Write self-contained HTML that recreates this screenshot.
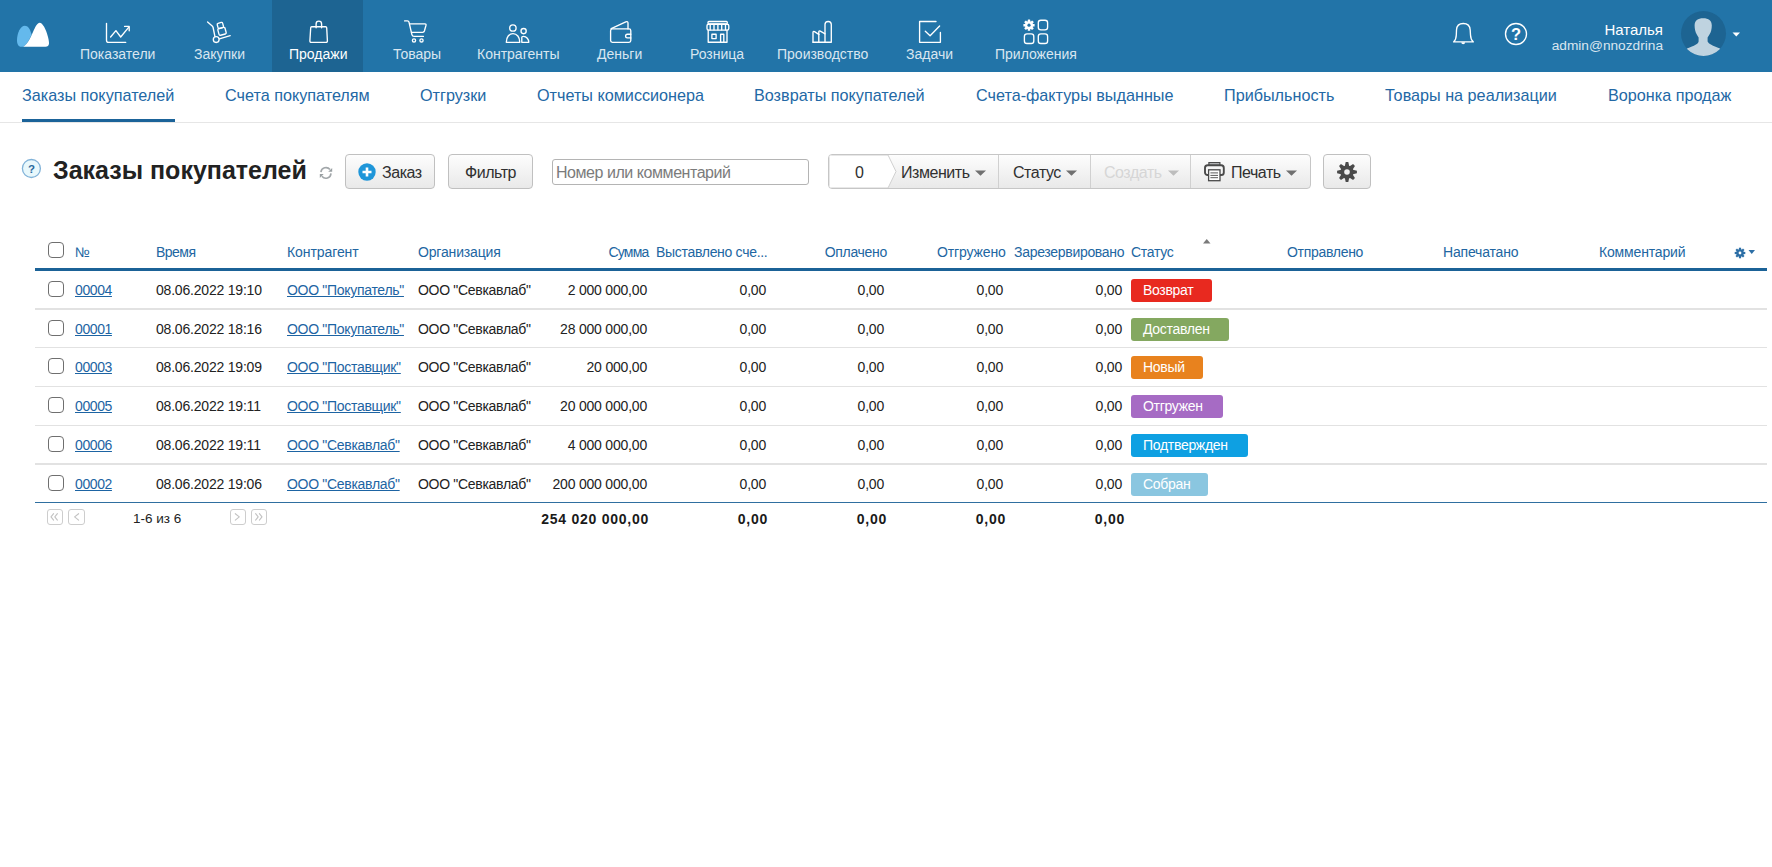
<!DOCTYPE html>
<html><head><meta charset="utf-8">
<style>
*{box-sizing:border-box;margin:0;padding:0}
html,body{width:1772px;height:867px;overflow:hidden;background:#fff;font-family:"Liberation Sans",sans-serif;color:#222}
.a{position:absolute;white-space:nowrap}
#hdr{position:absolute;left:0;top:0;width:1772px;height:72px;background:#2274a8}
#act{position:absolute;left:272px;top:0;width:91px;height:72px;background:#1d6492}
.nl{position:absolute;top:46px;font-size:14px;line-height:16px;color:#d9e6f0}
.ic{position:absolute;overflow:visible}
.sn{position:absolute;top:85px;font-size:16.2px;line-height:20px;color:#2368a5}
#subline{position:absolute;left:0;top:122px;width:1772px;height:1px;background:#e6e6e6}
.btn{position:absolute;top:154px;height:35px;border:1px solid #c0c0c0;border-radius:4px;background:linear-gradient(#fdfdfd,#e9e9e9);font-size:16px;letter-spacing:-0.45px;line-height:33px;color:#303030}
.th{position:absolute;top:244px;font-size:14px;letter-spacing:-0.3px;line-height:17px;color:#2166a2}
.td{position:absolute;font-size:14px;letter-spacing:-0.3px;line-height:17px;color:#222}
.n{letter-spacing:-0.2px}
.lnk.n{letter-spacing:-0.4px}
.lnk{color:#1d64a3;text-decoration:underline}
.r{text-align:right}
.badge{position:absolute;left:1131px;height:23px;border-radius:3px;color:#fff;font-size:14px;letter-spacing:-0.3px;line-height:23px;padding-left:12px}
.cb{position:absolute;left:48px;width:16px;height:16px;border:1.6px solid #6f6f6f;border-radius:4px;background:#fff}
.sep{position:absolute;left:35px;width:1732px;background:#e2e2e2}
.pg{position:absolute;top:509px;width:16px;height:16px;border:1px solid #cdcdcd;border-radius:3px;background:#fff}
.tot{position:absolute;top:511px;font-size:14px;font-weight:bold;line-height:17px;color:#1a1a1a;text-align:right;letter-spacing:0.75px}
</style></head><body>
<div id="hdr"></div>
<div id="act"></div>
<svg class="ic" style="left:0;top:0" width="1772" height="72" viewBox="0 0 1772 72">
 <!-- logo -->
 <path d="M17 40.5 C17 33 20.5 25.8 24.8 25.8 C28 25.8 30 29 31.6 34.5 C29 40.5 26.5 44.5 23.5 46.8 L21 46.8 C18.5 46.8 17 44 17 40.5 Z" fill="#64b9ec"/>
 <path d="M23.3 46.8 C27 44.5 30 39 33 32 C35.5 26.5 37.5 22.8 39.6 22.8 C42.5 22.8 46 29 48 37 C49 41 49 42.5 49 43.5 C49 45.5 47.5 46.8 45.5 46.8 Z" fill="#fff"/>
 <g fill="none" stroke="#fff" stroke-width="1.35" stroke-linecap="round" stroke-linejoin="round">
  <!-- chart -->
  <path d="M106.5 23.3 V40.2 Q106.5 42.4 108.7 42.4 H125.7"/>
  <path d="M110.6 37 L115.9 30.6 L120.7 37 L128.6 27.4"/>
  <path d="M124.6 26.4 H129.2 V30.8"/>
  <!-- hand truck -->
  <path d="M207.6 22 L212.2 26 Q213 26.8 213.2 28 L214.9 36.3"/>
  <circle cx="216.2" cy="39.6" r="2.9"/>
  <path d="M219.4 38.8 L230.2 35.7"/>
  <g transform="rotate(-15 223 34.6)">
   <rect x="220" y="22.4" width="5.6" height="5.4" rx="1.2"/>
   <rect x="219.2" y="27.8" width="7.4" height="6.8" rx="1.2"/>
  </g>
  <!-- bag -->
  <path d="M311.7 26.7 H325.6 Q326.6 26.7 326.7 27.7 L327.4 40.8 Q327.5 42.3 326 42.3 H311.3 Q309.8 42.3 309.9 40.8 L310.7 27.7 Q310.8 26.7 311.7 26.7 Z"/>
  <path d="M316.1 27.8 V23.9 A2.75 2.75 0 0 1 321.6 23.9 V27.8"/>
  <!-- cart -->
  <path d="M404.6 20.9 H407.4 Q408.7 20.9 409 22.2 L411.9 34.6 Q412.3 36.4 414.1 36.4 H423.4"/>
  <path d="M409.7 23.9 H425 Q426.3 23.9 426 25.2 L424.4 31 Q424 32.3 422.7 32.3 H411.5"/>
  <circle cx="414" cy="40.4" r="1.6"/>
  <circle cx="421.5" cy="40.4" r="1.6"/>
  <!-- people -->
  <circle cx="512.9" cy="28" r="3.2"/>
  <path d="M506.3 42.3 C506.3 37.2 509.2 33.6 513 33.6 C516.9 33.6 519.8 37.2 519.8 42.3 Z"/>
  <circle cx="523.6" cy="31.1" r="2.6"/>
  <path d="M521.8 42.3 V37.3 Q521.8 36.4 523.4 36.4 C526.6 36.4 528.8 39.2 528.8 42.3 Z"/>
  <!-- wallet -->
  <path d="M612.4 28.9 H629 Q630.8 28.9 630.8 30.7 V40.5 Q630.8 42.3 629 42.3 H612.4 Q610.6 42.3 610.6 40.5 V30.7 Q610.6 28.9 612.4 28.9 Z"/>
  <path d="M611.2 28.7 L625.8 21.9 Q628 21 628 23.2 V28.9"/>
  <path d="M630.8 34.2 H627.4 Q625.6 34.2 625.6 36.05 Q625.6 37.9 627.4 37.9 H630.8"/>
  <!-- store -->
  <rect x="708" y="21.5" width="19.3" height="2.3" rx="0.9"/>
  <rect x="707" y="24.2" width="21.8" height="5.9" rx="1.6"/>
  <path d="M710.2 24.6 V29.7 M714 24.6 V29.7 M717.9 24.6 V29.7 M721.7 24.6 V29.7 M725.5 24.6 V29.7"/>
  <path d="M708.2 30.2 V42.2 H727 V30.2"/>
  <rect x="711.9" y="34.2" width="4.2" height="4.4"/>
  <path d="M720.6 42.2 V34.2 H723.8 V42.2"/>
  <!-- factory -->
  <path d="M813 42.2 V32.6 Q813 30.9 814.5 31.7 L818.8 34.3 V32.1 Q818.8 30.4 820.3 31.2 L825.1 33.8"/>
  <path d="M818.8 34.3 V42.2"/>
  <path d="M813 42.2 H831.3 V24.6 A3.15 3.15 0 0 0 825 24.6 V42.2"/>
  <!-- tasks -->
  <path d="M936 21.5 H919.6 V42.3 H940.4 V32.4"/>
  <path d="M925.3 31.2 L930.1 35.7 L939.6 26"/>
  <!-- apps -->
  <rect x="1038.3" y="20.2" width="9.3" height="9.6" rx="2.6"/>
  <rect x="1024.4" y="33.9" width="9.4" height="9.6" rx="2.6"/>
  <rect x="1038.3" y="33.9" width="9.3" height="9.6" rx="2.6"/>
  <!-- bell -->
  <path d="M1453.6 41.9 Q1456.2 39.5 1456.3 35 L1456.5 30 Q1456.8 23.5 1463.3 23.5 Q1469.8 23.5 1470.2 30 L1470.5 35 Q1470.6 39.5 1473.4 41.9 Z"/>
  <!-- help -->
  <circle cx="1516" cy="34" r="10.5"/>
 </g>
 <path d="M1461.3 42.3 A1.9 1.9 0 0 0 1465.1 42.3 Z" fill="#fff"/>
 <!-- apps gear -->
 <g transform="translate(1029 25.2)" fill="#fff">
  <circle r="4"/>
  <rect x="-1.25" y="-5.6" width="2.5" height="11.2" rx="0.5"/>
  <rect x="-1.25" y="-5.6" width="2.5" height="11.2" rx="0.5" transform="rotate(45)"/>
  <rect x="-1.25" y="-5.6" width="2.5" height="11.2" rx="0.5" transform="rotate(90)"/>
  <rect x="-1.25" y="-5.6" width="2.5" height="11.2" rx="0.5" transform="rotate(135)"/>
  <circle r="1.6" fill="#2274a8"/>
 </g>
 <text x="1516" y="40.2" text-anchor="middle" font-family="Liberation Sans" font-weight="bold" font-size="16.5" fill="#fff">?</text>
 <!-- avatar -->
 <circle cx="1703.5" cy="33.5" r="22.5" fill="#1d6492"/>
 <clipPath id="av"><circle cx="1703.5" cy="33.5" r="22.5"/></clipPath>
 <g clip-path="url(#av)" fill="#bfd3e0">
  <path d="M1703.2 18.3 C1708.6 18.3 1711.8 20.6 1711.8 25.6 C1711.8 27.2 1711.6 29 1711.2 30.6 C1710.6 33.4 1708.8 35.8 1707.6 37.4 L1707.6 41.4 C1708.6 43.6 1712.5 45.6 1720 48.4 L1732 60 L1676 60 L1687 48.4 C1694.5 45.6 1698.4 43.6 1698.6 41.4 L1698.6 37.4 C1697.5 35.8 1695.7 33.4 1695.2 30.6 C1694.8 29 1694.6 27.2 1694.6 25.6 C1694.6 20.6 1697.8 18.3 1703.2 18.3 Z"/>
 </g>
 <path d="M1732.5 32.5 H1740 L1736.25 36.5 Z" fill="#fff"/>
</svg>
<div class="nl" style="left:80px">Показатели</div>
<div class="nl" style="left:194px">Закупки</div>
<div class="nl" style="left:289px;color:#fff">Продажи</div>
<div class="nl" style="left:393px">Товары</div>
<div class="nl" style="left:477px">Контрагенты</div>
<div class="nl" style="left:597px">Деньги</div>
<div class="nl" style="left:690px">Розница</div>
<div class="nl" style="left:777px">Производство</div>
<div class="nl" style="left:906px">Задачи</div>
<div class="nl" style="left:995px">Приложения</div>
<div class="a" style="right:109px;top:21px;font-size:15px;line-height:17px;color:#fff">Наталья</div>
<div class="a" style="right:109px;top:37.5px;font-size:13.7px;line-height:16px;color:#d9e6f0">admin@nnozdrina</div>

<!-- sub nav -->
<div class="sn" style="left:22px">Заказы покупателей</div>
<div class="sn" style="left:225px">Счета покупателям</div>
<div class="sn" style="left:420px">Отгрузки</div>
<div class="sn" style="left:537px">Отчеты комиссионера</div>
<div class="sn" style="left:754px">Возвраты покупателей</div>
<div class="sn" style="left:976px">Счета-фактуры выданные</div>
<div class="sn" style="left:1224px">Прибыльность</div>
<div class="sn" style="left:1385px">Товары на реализации</div>
<div class="sn" style="left:1608px">Воронка продаж</div>
<div id="subline"></div>
<div class="a" style="left:22px;top:119px;width:153px;height:3px;background:#1b6399"></div>

<!-- title row -->
<svg class="ic" style="left:0;top:140px" width="1400" height="60" viewBox="0 140 1400 60">
 <circle cx="31.4" cy="168.5" r="9" fill="#e8f8fc" stroke="#80b2d8" stroke-width="1.3"/>
 <text x="31.5" y="172.9" text-anchor="middle" font-family="Liberation Sans" font-weight="bold" font-size="11.5" fill="#2a6a9e">?</text>
 <!-- refresh -->
 <g fill="none" stroke="#a2a7aa" stroke-width="1.6">
  <path d="M320.9 172.2 A5.1 5.1 0 0 1 330 169.6"/>
  <path d="M331 173.4 A5.1 5.1 0 0 1 321.9 176.3"/>
 </g>
 <path d="M332.2 167.9 V171.8 H328.2 Z" fill="#9aa0a3"/>
 <path d="M319.8 174.1 H323.7 L319.8 178 Z" fill="#9aa0a3"/>
</svg>
<div class="a" style="left:53px;top:156px;font-size:25px;line-height:29px;font-weight:bold;color:#222">Заказы покупателей</div>

<div class="btn" style="left:345px;width:90px">
 <svg class="ic" style="left:12px;top:8px" width="18" height="18" viewBox="0 0 18 18"><circle cx="9" cy="9" r="8.7" fill="#1f96d9"/><path d="M9 4.5V13.5M4.5 9H13.5" stroke="#fff" stroke-width="2.6"/></svg>
 <span class="a" style="left:36px;top:1px">Заказ</span>
</div>
<div class="btn" style="left:448px;width:85px;text-align:center;padding-top:1px">Фильтр</div>
<div class="a" style="left:552px;top:159px;width:257px;height:26px;border:1px solid #b4b4b4;border-radius:3px;background:#fff"></div>
<div class="a" style="left:556px;top:164px;font-size:16px;letter-spacing:-0.45px;line-height:18px;color:#7b7b7b">Номер или комментарий</div>

<!-- action group -->
<div class="a" style="left:828px;top:154px;width:483px;height:35px;border:1px solid #c6c6c6;border-radius:4px;background:linear-gradient(#fdfdfd,#e9e9e9);overflow:hidden">
 <svg class="ic" style="left:0;top:0" width="70" height="33" viewBox="0 0 70 33"><path d="M0 0 H59 L67 16.5 L59 33 H0 Z" fill="#fff" stroke="#d0d0d0" stroke-width="1"/></svg>
 <span class="a" style="left:26px;top:1px;font-size:16px;line-height:33px;color:#303030">0</span>
 <span class="a" style="left:72px;top:1px;font-size:16px;letter-spacing:-0.45px;line-height:33px;color:#303030">Изменить</span>
 <svg class="ic" style="left:146px;top:15px" width="12" height="7"><path d="M0 0.6H11L5.5 5.8Z" fill="#707070"/></svg>
 <div class="a" style="left:169px;top:0;width:1px;height:33px;background:#d0d0d0"></div>
 <span class="a" style="left:184px;top:1px;font-size:16px;letter-spacing:-0.45px;line-height:33px;color:#303030">Статус</span>
 <svg class="ic" style="left:237px;top:15px" width="12" height="7"><path d="M0 0.6H11L5.5 5.8Z" fill="#707070"/></svg>
 <div class="a" style="left:261px;top:0;width:1px;height:33px;background:#d0d0d0"></div>
 <span class="a" style="left:275px;top:1px;font-size:16px;letter-spacing:-0.45px;line-height:33px;color:#d6d6d6">Создать</span>
 <svg class="ic" style="left:339px;top:15px" width="12" height="7"><path d="M0 0.6H11L5.5 5.8Z" fill="#bdbdbd"/></svg>
 <div class="a" style="left:361px;top:0;width:1px;height:33px;background:#d0d0d0"></div>
 <svg class="ic" style="left:375px;top:7px" width="21" height="20" viewBox="0 0 21 20">
  <rect x="4.9" y="0.6" width="11" height="2.9" fill="#c8cacc" stroke="#4a4a4a" stroke-width="1.2"/>
  <rect x="1" y="3.3" width="18.8" height="9.7" rx="2.6" fill="#f6f6f6" stroke="#4a4a4a" stroke-width="1.9"/>
  <rect x="4.6" y="7.8" width="11.4" height="10.9" fill="#fff" stroke="#4a4a4a" stroke-width="1.3"/>
  <path d="M6.4 10.9H14M6.4 13.4H14M6.4 15.7H14" stroke="#5a5a5a" stroke-width="1"/>
 </svg>
 <span class="a" style="left:402px;top:1px;font-size:16px;letter-spacing:-0.45px;line-height:33px;color:#303030">Печать</span>
 <svg class="ic" style="left:457px;top:15px" width="12" height="7"><path d="M0 0.6H11L5.5 5.8Z" fill="#707070"/></svg>
</div>
<div class="btn" style="left:1323px;width:48px">
 <svg class="ic" style="left:13px;top:7px" width="20" height="20" viewBox="-10 -10 20 20" fill="#4a4a4a">
  <circle r="6.6"/><path d="M-2.4 -5 L2.4 -5 L1.3 -9.9 L-1.3 -9.9 Z" transform="rotate(0)"/><path d="M-2.4 -5 L2.4 -5 L1.3 -9.9 L-1.3 -9.9 Z" transform="rotate(45)"/><path d="M-2.4 -5 L2.4 -5 L1.3 -9.9 L-1.3 -9.9 Z" transform="rotate(90)"/><path d="M-2.4 -5 L2.4 -5 L1.3 -9.9 L-1.3 -9.9 Z" transform="rotate(135)"/><path d="M-2.4 -5 L2.4 -5 L1.3 -9.9 L-1.3 -9.9 Z" transform="rotate(180)"/><path d="M-2.4 -5 L2.4 -5 L1.3 -9.9 L-1.3 -9.9 Z" transform="rotate(225)"/><path d="M-2.4 -5 L2.4 -5 L1.3 -9.9 L-1.3 -9.9 Z" transform="rotate(270)"/><path d="M-2.4 -5 L2.4 -5 L1.3 -9.9 L-1.3 -9.9 Z" transform="rotate(315)"/>
  <circle r="2.8" fill="#f1f1f1"/>
 </svg>
</div>
<!-- table header -->
<div class="cb" style="top:242px"></div>
<div class="th" style="left:75px">№</div>
<div class="th" style="left:156px;letter-spacing:-0.54px">Время</div>
<div class="th" style="left:287px;letter-spacing:-0.08px">Контрагент</div>
<div class="th" style="left:418px;letter-spacing:-0.16px">Организация</div>
<div class="th" style="right:1123.5px;letter-spacing:-0.8px">Сумма</div>
<div class="th" style="left:656px">Выставлено сче...</div>
<div class="th" style="right:885px">Оплачено</div>
<div class="th" style="right:766.3px;letter-spacing:-0.12px">Отгружено</div>
<div class="th" style="left:1014px">Зарезервировано</div>
<div class="th" style="left:1131px">Статус</div>
<div class="th" style="left:1287px">Отправлено</div>
<div class="th" style="left:1443px;letter-spacing:-0.18px">Напечатано</div>
<div class="th" style="left:1599px;letter-spacing:-0.17px">Комментарий</div>
<div class="a" style="left:35px;top:268px;width:1732px;height:3px;background:#1b6297"></div>
<div class="sep" style="top:308px;height:2px"></div>
<div class="sep" style="top:347px;height:1px"></div>
<div class="sep" style="top:386px;height:1px"></div>
<div class="sep" style="top:425px;height:1px"></div>
<div class="sep" style="top:463px;height:2px"></div>
<div class="a" style="left:35px;top:502px;width:1732px;height:1px;background:#2f6fa0"></div>
<div class="cb" style="top:281px"></div>
<div class="td lnk n" style="left:75px;top:282px">00004</div>
<div class="td n" style="left:156px;top:282px">08.06.2022 19:10</div>
<div class="td lnk" style="left:287px;top:282px">ООО "Покупатель"</div>
<div class="td" style="left:418px;top:282px">ООО "Севкавлаб"</div>
<div class="td n" style="right:1125px;top:282px">2 000 000,00</div>
<div class="td n" style="right:1006px;top:282px">0,00</div>
<div class="td n" style="right:888px;top:282px">0,00</div>
<div class="td n" style="right:769px;top:282px">0,00</div>
<div class="td n" style="right:650px;top:282px">0,00</div>
<div class="badge" style="top:279px;width:81px;background:#e8291f">Возврат</div>
<div class="cb" style="top:320px"></div>
<div class="td lnk n" style="left:75px;top:321px">00001</div>
<div class="td n" style="left:156px;top:321px">08.06.2022 18:16</div>
<div class="td lnk" style="left:287px;top:321px">ООО "Покупатель"</div>
<div class="td" style="left:418px;top:321px">ООО "Севкавлаб"</div>
<div class="td n" style="right:1125px;top:321px">28 000 000,00</div>
<div class="td n" style="right:1006px;top:321px">0,00</div>
<div class="td n" style="right:888px;top:321px">0,00</div>
<div class="td n" style="right:769px;top:321px">0,00</div>
<div class="td n" style="right:650px;top:321px">0,00</div>
<div class="badge" style="top:318px;width:98px;background:#84a860">Доставлен</div>
<div class="cb" style="top:358px"></div>
<div class="td lnk n" style="left:75px;top:359px">00003</div>
<div class="td n" style="left:156px;top:359px">08.06.2022 19:09</div>
<div class="td lnk" style="left:287px;top:359px">ООО "Поставщик"</div>
<div class="td" style="left:418px;top:359px">ООО "Севкавлаб"</div>
<div class="td n" style="right:1125px;top:359px">20 000,00</div>
<div class="td n" style="right:1006px;top:359px">0,00</div>
<div class="td n" style="right:888px;top:359px">0,00</div>
<div class="td n" style="right:769px;top:359px">0,00</div>
<div class="td n" style="right:650px;top:359px">0,00</div>
<div class="badge" style="top:356px;width:72px;background:#e8821e">Новый</div>
<div class="cb" style="top:397px"></div>
<div class="td lnk n" style="left:75px;top:398px">00005</div>
<div class="td n" style="left:156px;top:398px">08.06.2022 19:11</div>
<div class="td lnk" style="left:287px;top:398px">ООО "Поставщик"</div>
<div class="td" style="left:418px;top:398px">ООО "Севкавлаб"</div>
<div class="td n" style="right:1125px;top:398px">20 000 000,00</div>
<div class="td n" style="right:1006px;top:398px">0,00</div>
<div class="td n" style="right:888px;top:398px">0,00</div>
<div class="td n" style="right:769px;top:398px">0,00</div>
<div class="td n" style="right:650px;top:398px">0,00</div>
<div class="badge" style="top:395px;width:92px;background:#a66bc4">Отгружен</div>
<div class="cb" style="top:436px"></div>
<div class="td lnk n" style="left:75px;top:437px">00006</div>
<div class="td n" style="left:156px;top:437px">08.06.2022 19:11</div>
<div class="td lnk" style="left:287px;top:437px">ООО "Севкавлаб"</div>
<div class="td" style="left:418px;top:437px">ООО "Севкавлаб"</div>
<div class="td n" style="right:1125px;top:437px">4 000 000,00</div>
<div class="td n" style="right:1006px;top:437px">0,00</div>
<div class="td n" style="right:888px;top:437px">0,00</div>
<div class="td n" style="right:769px;top:437px">0,00</div>
<div class="td n" style="right:650px;top:437px">0,00</div>
<div class="badge" style="top:434px;width:117px;background:#0ea0e2">Подтвержден</div>
<div class="cb" style="top:475px"></div>
<div class="td lnk n" style="left:75px;top:476px">00002</div>
<div class="td n" style="left:156px;top:476px">08.06.2022 19:06</div>
<div class="td lnk" style="left:287px;top:476px">ООО "Севкавлаб"</div>
<div class="td" style="left:418px;top:476px">ООО "Севкавлаб"</div>
<div class="td n" style="right:1125px;top:476px">200 000 000,00</div>
<div class="td n" style="right:1006px;top:476px">0,00</div>
<div class="td n" style="right:888px;top:476px">0,00</div>
<div class="td n" style="right:769px;top:476px">0,00</div>
<div class="td n" style="right:650px;top:476px">0,00</div>
<div class="badge" style="top:473px;width:77px;background:#8ac6e0">Собран</div>
<svg class="ic" style="left:1200px;top:236px" width="14" height="10"><path d="M3 7.5H10.5L6.75 3Z" fill="#7a7a7a"/></svg>
<svg class="ic" style="left:1733px;top:246px" width="24" height="14" viewBox="0 0 24 14">
 <g transform="translate(7 7)" fill="#2d6fa6"><circle r="3.8"/><rect x="-1.1" y="-5.3" width="2.2" height="10.6"/><rect x="-1.1" y="-5.3" width="2.2" height="10.6" transform="rotate(45)"/><rect x="-1.1" y="-5.3" width="2.2" height="10.6" transform="rotate(90)"/><rect x="-1.1" y="-5.3" width="2.2" height="10.6" transform="rotate(135)"/><circle r="1.4" fill="#fff"/></g>
 <path d="M15.5 4H22L18.75 8Z" fill="#2d6fa6"/>
</svg>
<!-- footer -->
<div class="pg" style="left:47px"></div>
<div class="pg" style="left:68px;width:17px"></div>
<div class="a" style="left:133px;top:510px;font-size:13.5px;line-height:17px;color:#222">1-6 из 6</div>
<div class="pg" style="left:230px"></div>
<div class="pg" style="left:251px"></div>
<svg class="ic" style="left:0;top:500px" width="280" height="30" viewBox="0 500 280 30">
 <g fill="none" stroke="#c2c2c2" stroke-width="1.1" stroke-linecap="round" stroke-linejoin="round">
  <path d="M53.6 513.7 L51 516.9 L53.6 520.1 M57.4 513.7 L54.8 516.9 L57.4 520.1"/>
  <path d="M78.6 513.7 L74.6 516.9 L78.6 520.1"/>
  <path d="M235.3 513.7 L239.3 516.9 L235.3 520.1"/>
  <path d="M255.6 513.7 L258.2 516.9 L255.6 520.1 M259.4 513.7 L262 516.9 L259.4 520.1"/>
 </g>
</svg>
<div class="tot" style="right:1123px">254 020 000,00</div>
<div class="tot" style="right:1004px">0,00</div>
<div class="tot" style="right:885px">0,00</div>
<div class="tot" style="right:766px">0,00</div>
<div class="tot" style="right:647px">0,00</div>

</body></html>
